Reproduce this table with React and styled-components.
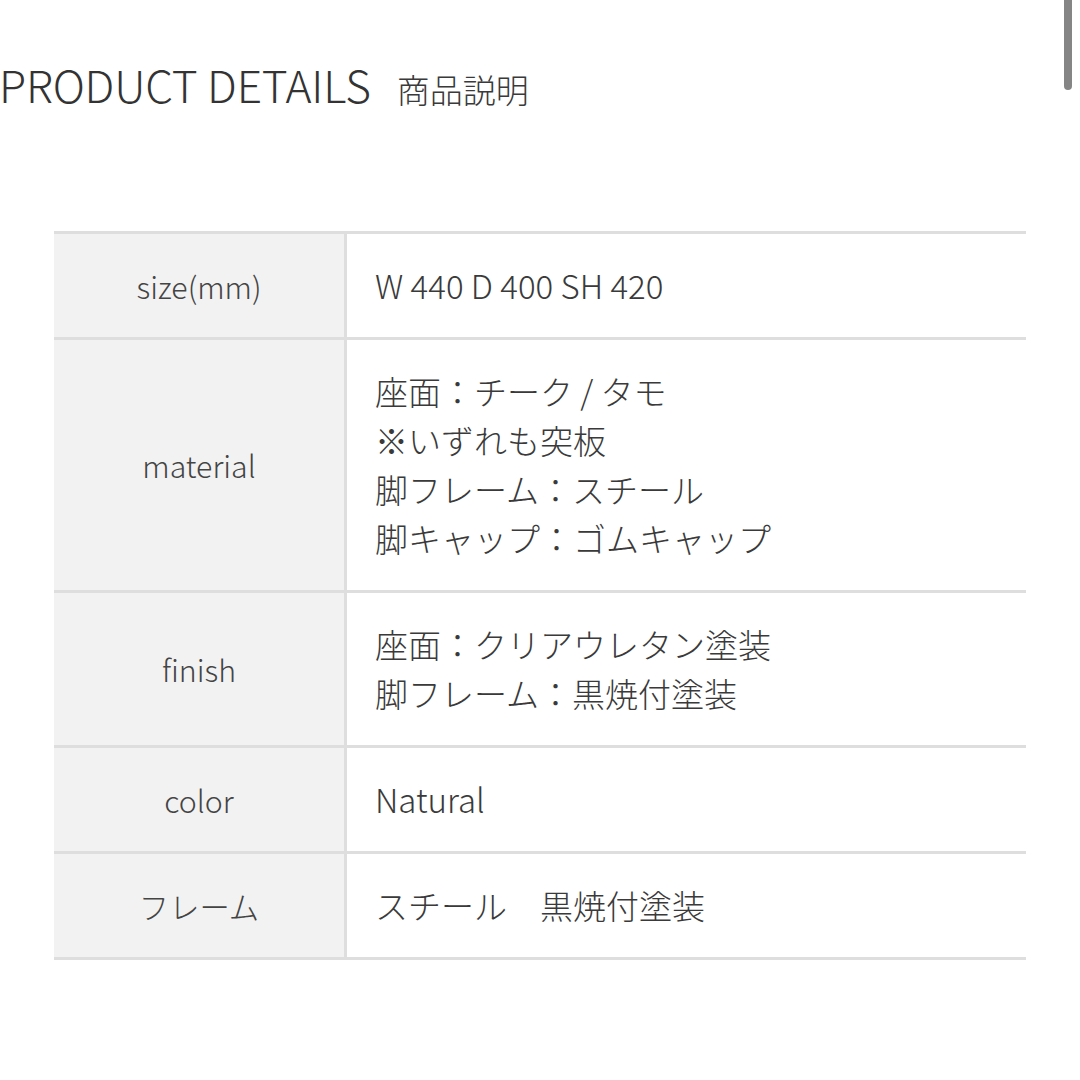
import styled, { createGlobalStyle } from "styled-components";

const GlobalStyle = createGlobalStyle`
	html, body {
		margin: 0;
		padding: 0;
		background: #fff;
	}
	body {
		font-family: "Noto Sans CJK JP", "Noto Sans", sans-serif;
		font-weight: 300;
		color: #3a3a3a;
	}
`;

const specs = [
	{ label: "size(mm)", lines: ["W 440 D 400 SH 420"] },
	{
		label: "material",
		lines: [
			"座面：チーク / タモ",
			"※いずれも突板",
			"脚フレーム：スチール",
			"脚キャップ：ゴムキャップ",
		],
	},
	{ label: "finish", lines: ["座面：クリアウレタン塗装", "脚フレーム：黒焼付塗装"] },
	{ label: "color", lines: ["Natural"] },
	{ label: "フレーム", lines: ["スチール　黒焼付塗装"] },
];

const App = () => {
	return (
		<>
			<GlobalStyle />
			<Page>
				<Scrollbar />
				<Heading>
					<Title>PRODUCT DETAILS</Title>
					<SubTitle>商品説明</SubTitle>
				</Heading>

				<SpecTable>
					{specs.map((row) => (
						<Row key={row.label}>
							<Label>{row.label}</Label>
							<Value>
								{row.lines.map((line) => (
									<Line key={line}>{line}</Line>
								))}
							</Value>
						</Row>
					))}
				</SpecTable>
			</Page>
		</>
	);
};

export default App;

// Styled components
const Page = styled.div`
	position: relative;
	width: 1080px;
	height: 1080px;
	overflow: hidden;
	background: #fff;
`;

const Scrollbar = styled.div`
	position: absolute;
	top: 0;
	right: 8px;
	width: 8px;
	height: 90px;
	border-radius: 0 0 4px 4px;
	background: #858585;
`;

const Heading = styled.div`
	display: flex;
	align-items: baseline;
	gap: 26px;
	height: 60px;
	padding: 54px 0 0 0;
	margin-left: -1px;
`;

const Title = styled.h1`
	margin: 0;
	font-size: 44.3px;
	font-weight: 300;
	line-height: 60px;
	color: #333;
	letter-spacing: -0.2px;
`;

const SubTitle = styled.span`
	font-size: 33px;
	font-weight: 300;
	color: #3a3a3a;
`;

const SpecTable = styled.div`
	margin: 117px 54px 0 54px;
	border-top: 3px solid #dedede;
`;

const Row = styled.div`
	display: grid;
	grid-template-columns: 293px 1fr;
	border-bottom: 3px solid #dedede;
`;

const Label = styled.div`
	display: flex;
	align-items: center;
	justify-content: center;
	background: #f2f2f2;
	border-right: 3px solid #dedede;
	font-size: 30.3px;
	color: #444;
`;

const Value = styled.div`
	padding: 27px 0 27px 28px;
	font-size: 33px;
	line-height: 49px;
	color: #3a3a3a;
`;

const Line = styled.div`
	white-space: pre;
`;
